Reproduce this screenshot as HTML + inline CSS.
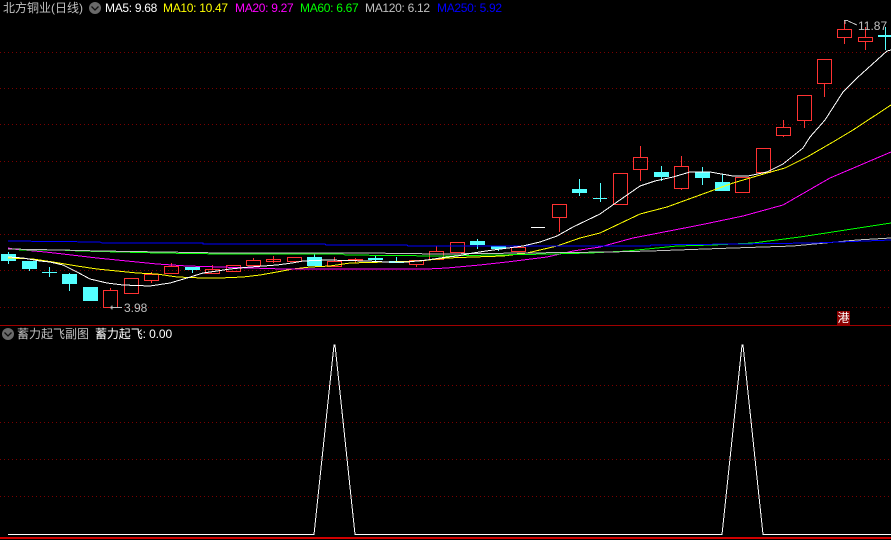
<!DOCTYPE html>
<html><head><meta charset="utf-8">
<style>
html,body{margin:0;padding:0;background:#000;width:891px;height:540px;overflow:hidden}
#w{position:relative;width:891px;height:540px;background:#000;overflow:hidden}
svg{position:absolute;left:0;top:0}
.t{position:absolute;font:12px/14px "Liberation Sans","WenQuanYi Zen Hei","Noto Sans CJK SC",sans-serif;white-space:nowrap}
</style></head><body><div id="w">
<svg width="891" height="540" viewBox="0 0 891 540" shape-rendering="crispEdges" fill="none">
<g stroke="#7a0000" stroke-dasharray="1 3">
<path d="M0 52.5H891M0 88.5H891M0 124.5H891M0 161.5H891M0 197.5H891M0 234.5H891M0 270.5H891M0 307.5H891M0 385.5H891M0 422.5H891M0 459.5H891M0 496.5H891"/>
</g>
<path d="M0 325.5H891" stroke="#a00000"/>
<path d="M0 537.5H891M0 538.5H891" stroke="#d00000"/>
<!-- red candles -->
<g stroke="#ff3232">
<rect x="103.5" y="290.5" width="14" height="17"/><path d="M110.5 288V290"/>
<rect x="124.5" y="278.5" width="14" height="15"/>
<rect x="144.5" y="274.5" width="14" height="6"/><path d="M151.5 272V274M151.5 281V283"/>
<rect x="164.5" y="266.5" width="14" height="7"/><path d="M171.5 263V266"/>
<rect x="205.5" y="269.5" width="14" height="4"/><path d="M212.5 265V269"/>
<rect x="226.5" y="265.5" width="14" height="6"/>
<rect x="246.5" y="260.5" width="14" height="5"/><path d="M253.5 258V260"/>
<rect x="266.5" y="259.5" width="14" height="2"/><path d="M273.5 256V263"/>
<rect x="287.5" y="257.5" width="14" height="4"/>
<rect x="327.5" y="261.5" width="14" height="5"/><path d="M334.5 257V261"/>
<rect x="348.5" y="259.5" width="14" height="1"/><path d="M355.5 258V263"/>
<rect x="409.5" y="260.5" width="14" height="4"/><path d="M416.5 265V267"/>
<rect x="429.5" y="251.5" width="14" height="8"/><path d="M436.5 246V251"/>
<rect x="450.5" y="242.5" width="14" height="10"/>
<rect x="511.5" y="247.5" width="14" height="4"/>
<rect x="552.5" y="204.5" width="14" height="13"/><path d="M559.5 218V232"/>
<rect x="613.5" y="173.5" width="14" height="31"/>
<rect x="633.5" y="157.5" width="14" height="12"/><path d="M640.5 146V157M640.5 170V181"/>
<rect x="674.5" y="166.5" width="14" height="22"/><path d="M681.5 156V166M681.5 189V190"/>
<rect x="735.5" y="177.5" width="14" height="15"/>
<rect x="756.5" y="148.5" width="14" height="24"/>
<rect x="776.5" y="127.5" width="14" height="8"/><path d="M783.5 120V127M783.5 136V137"/>
<rect x="797.5" y="95.5" width="14" height="25"/><path d="M804.5 121V128"/>
<rect x="817.5" y="59.5" width="14" height="24"/><path d="M824.5 84V97"/>
<rect x="837.5" y="29.5" width="14" height="8"/><path d="M844.5 21V29M844.5 38V44"/>
<rect x="858.5" y="37.5" width="14" height="4"/><path d="M865.5 27V37M865.5 42V50"/>
</g>
<!-- cyan candles -->
<g fill="#54ffff" stroke="none">
<rect x="1" y="254" width="15" height="7"/><rect x="8" y="252" width="1" height="12"/>
<rect x="22" y="261" width="15" height="8"/><rect x="29" y="269" width="1" height="2"/>
<rect x="42" y="272" width="15" height="1"/><rect x="49" y="267" width="1" height="10"/>
<rect x="62" y="274" width="15" height="10"/><rect x="69" y="273" width="1" height="18"/>
<rect x="83" y="287" width="15" height="14"/>
<rect x="185" y="267" width="15" height="3"/><rect x="192" y="267" width="1" height="6"/>
<rect x="307" y="257" width="15" height="9"/><rect x="314" y="254" width="1" height="4"/>
<rect x="368" y="258" width="15" height="2"/><rect x="375" y="255" width="1" height="8"/>
<rect x="389" y="261" width="15" height="2"/><rect x="396" y="257" width="1" height="5"/>
<rect x="470" y="241" width="15" height="4"/><rect x="477" y="239" width="1" height="10"/>
<rect x="491" y="246" width="15" height="3"/><rect x="498" y="249" width="1" height="2"/>
<rect x="572" y="189" width="15" height="4"/><rect x="579" y="179" width="1" height="17"/>
<rect x="593" y="198" width="14" height="1"/><rect x="600" y="183" width="1" height="19"/>
<rect x="654" y="172" width="15" height="5"/><rect x="661" y="166" width="1" height="15"/>
<rect x="695" y="172" width="15" height="6"/><rect x="702" y="167" width="1" height="18"/>
<rect x="715" y="182" width="15" height="9"/><rect x="722" y="174" width="1" height="9"/>
<rect x="878" y="35" width="13" height="2"/><rect x="885" y="27" width="1" height="23"/>
</g>
<path d="M531 227.5H545" stroke="#fff"/>
<!-- MAs -->
<path stroke="#ffff00" d="M8 258L33 259L53 262L77 266L97 269L117 271L137 273L157 274L177 277L203 278L220 278L243 277L260 275L277 272L293 269L310 267L330 266L350 263L387 262L420 261L447 258L473 257L503 256L527 253L557 246L580 238L600 233L640 214L667 207L700 195L733 183L767 173L785 168L807 157L833 142L853 130L891 105"/>
<path stroke="#ff00ff" d="M8 248L13 249L45 252L63 254L97 258L127 261L157 264L187 266L220 267L283 269L367 269L427 269L447 268L480 265L507 262L547 257L573 251L600 247L633 238L700 225L743 216L783 205L830 178L891 152"/>
<path stroke="#00ff00" d="M19 250L60 250L80 251L160 253L223 254L343 254L345 255L440 256L550 254L590 253L627 251L677 246L713 245L753 243L800 237L891 223"/>
<path stroke="#c0c0c0" d="M8 249L60 250L100 251L163 252L223 253L366 253L367 253L440 254L610 252L650 251L733 248L793 246L857 240L891 238"/>
<path stroke="#0000ff" d="M8 241L100 242L102 243L203 243L203 244L325 244L326 245L407 245L408 246L650 246L651 245L733 244L813 243L891 240"/>
<path stroke="#ffffff" d="M8 257L23 258L40 261L50 262L63 265L77 272L90 279L107 283L123 285L150 286L170 283L187 278L203 273L217 271L230 269L250 267L277 265L292 263L303 261L327 260L367 261L387 262L407 262L427 260L447 257L457 256L473 253L493 250L523 246L540 242L557 236L573 227L600 214L617 202L640 186L655 181L673 177L690 172L710 172L733 176L748 176L767 172L783 164L803 148L810 137L825 120L843 92L857 78L887 51L891 50"/>
<!-- markers -->
<g stroke="#c0c0c0">
<path d="M111 307.5H122M111 306.5V308.5M112 305.5V309.5M844 20.5H848M845 20.5V24M848 21L857 25"/>
</g>
<!-- lower -->
<path stroke="#ffffff" d="M8 534.5H314L334 345L335 345L355 534.5H722L742 345L743 345L763 534.5H891"/>
<!-- dropdown icons -->
<g shape-rendering="auto">
<circle cx="95" cy="8" r="6" fill="#6a6a6a"/><path d="M91.5 6.5L95 10L98.5 6.5" stroke="#111" stroke-width="1.3"/>
<circle cx="8" cy="334" r="6" fill="#6a6a6a"/><path d="M4.5 332.5L8 336L11.5 332.5" stroke="#111" stroke-width="1.3"/>
</g>
</svg>
<div class="t" style="left:3px;top:1px;color:#c0c0c0">北方铜业(日线)</div>
<div class="t" style="left:105px;top:1px;color:#fff;letter-spacing:-.3px">MA5: 9.68</div>
<div class="t" style="left:163px;top:1px;color:#ff0;letter-spacing:-.3px">MA10: 10.47</div>
<div class="t" style="left:235px;top:1px;color:#f0f;letter-spacing:-.3px">MA20: 9.27</div>
<div class="t" style="left:300px;top:1px;color:#0f0;letter-spacing:-.3px">MA60: 6.67</div>
<div class="t" style="left:365px;top:1px;color:#c0c0c0;letter-spacing:-.3px">MA120: 6.12</div>
<div class="t" style="left:437px;top:1px;color:#00f;letter-spacing:-.3px">MA250: 5.92</div>
<div class="t" style="left:124px;top:301px;color:#c0c0c0">3.98</div>
<div class="t" style="left:858px;top:19px;color:#c0c0c0">11.87</div>
<div class="t" style="left:837px;top:311px;width:13px;height:14px;background:#8b0000;color:#fff;text-align:center">港</div>
<div class="t" style="left:17px;top:327px;color:#c0c0c0">蓄力起飞副图</div>
<div class="t" style="left:95px;top:327px;color:#fff;letter-spacing:-.1px">蓄力起飞: 0.00</div>
</div></body></html>
